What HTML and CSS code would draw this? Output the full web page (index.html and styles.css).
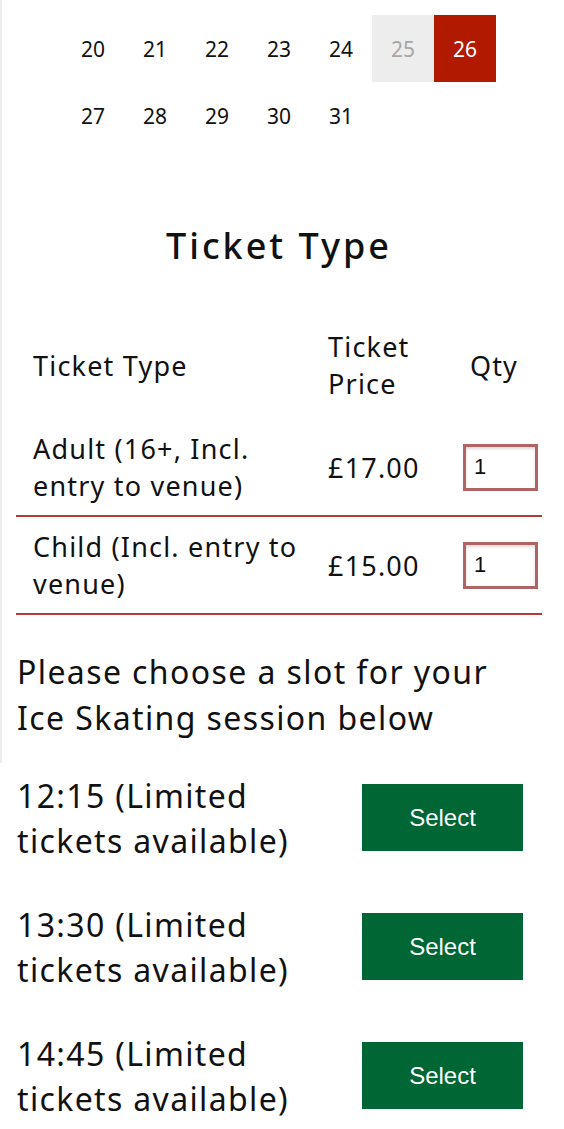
FILE: index.html
```html
<!DOCTYPE html>
<html lang="en">
<head>
<meta charset="utf-8">
<title>Ticket booking</title>
<link rel="stylesheet" href="styles.css">
</head>
<body>
<div class="top">
  <table class="calendar">
    <tbody>
      <tr>
        <td>20</td><td>21</td><td>22</td><td>23</td><td>24</td>
        <td class="disabled">25</td><td class="selected">26</td>
      </tr>
      <tr>
        <td>27</td><td>28</td><td>29</td><td>30</td><td>31</td><td></td><td></td>
      </tr>
    </tbody>
  </table>

  <h2 class="section-title">Ticket Type</h2>

  <table class="tickets">
    <thead>
      <tr>
        <th class="col-type">Ticket Type</th>
        <th class="col-price">Ticket Price</th>
        <th class="col-qty">Qty</th>
      </tr>
    </thead>
    <tbody>
      <tr>
        <td class="col-type">Adult (16+, Incl. entry to venue)</td>
        <td class="col-price">£17.00</td>
        <td class="col-qty"><input class="qty-input" type="text" value="1"></td>
      </tr>
      <tr>
        <td class="col-type">Child (Incl. entry to venue)</td>
        <td class="col-price">£15.00</td>
        <td class="col-qty"><input class="qty-input" type="text" value="1"></td>
      </tr>
    </tbody>
  </table>

  <p class="slot-intro">Please choose a slot for your Ice Skating session below</p>
</div>

<div class="slots">
  <div class="slot">
    <div class="slot-label">12:15 (Limited tickets available)</div>
    <button class="select-btn" type="button">Select</button>
  </div>
  <div class="slot">
    <div class="slot-label">13:30 (Limited tickets available)</div>
    <button class="select-btn" type="button">Select</button>
  </div>
  <div class="slot">
    <div class="slot-label">14:45 (Limited tickets available)</div>
    <button class="select-btn" type="button">Select</button>
  </div>
</div>
</body>
</html>
```

FILE: styles.css
```css
html, body {
  margin: 0;
  padding: 0;
  background: #ffffff;
}

body {
  font-family: "Noto Sans", "Open Sans", sans-serif;
  color: #111111;
}

.top {
  border-left: 2px solid #ececec;
  padding-top: 15px;
  padding-bottom: 22px;
}

.calendar {
  border-collapse: collapse;
  margin-left: 60px;
}

.calendar td {
  width: 62px;
  height: 67px;
  padding: 0;
  text-align: center;
  vertical-align: middle;
  font-size: 21px;
}

.calendar td.disabled {
  background: #ededed;
  color: #a6a6a6;
}

.calendar td.selected {
  background: #b21a00;
  color: #ffffff;
}

.section-title {
  margin: 72px 8px 0 0;
  text-align: center;
  font-size: 36px;
  font-weight: 500;
  letter-spacing: 3px;
  line-height: 50px;
}

.tickets {
  border-collapse: collapse;
  width: 526px;
  margin: 57px 0 0 14px;
  table-layout: fixed;
}

.tickets th {
  font-weight: 400;
  text-align: left;
  vertical-align: middle;
  padding: 0 0 17px 17px;
}

.tickets th,
.tickets td {
  font-size: 27px;
  line-height: 37px;
  letter-spacing: 1.2px;
}

.tickets td {
  padding: 11px 0 11px 17px;
  border-bottom: 2px solid #b53a3a;
  vertical-align: middle;
}

.tickets .col-type { width: 278px; }
.tickets .col-price { width: 118px; }
.tickets th.col-qty { text-align: center; padding-left: 0; }

.qty-input {
  box-sizing: border-box;
  width: 75px;
  height: 47px;
  border: 3px solid #b06464;
  box-shadow: inset 0 2px 3px rgba(0, 0, 0, 0.15);
  font-family: "Liberation Sans", Arial, sans-serif;
  font-size: 22px;
  padding: 0 8px;
  color: #111;
  background: #fff;
}

.slot-intro {
  margin: 34px 22px 0 15px;
  font-size: 32px;
  line-height: 46px;
  letter-spacing: 1.4px;
}

.slots {
  display: flex;
  flex-direction: column;
  gap: 39px;
  padding: 10px 0 0 17px;
}

.slot {
  display: flex;
  align-items: flex-start;
  justify-content: space-between;
  padding-right: 41px;
}

.slot-label {
  width: 300px;
  font-size: 32px;
  line-height: 45px;
  letter-spacing: 1.35px;
}

.select-btn {
  width: 161px;
  height: 67px;
  margin-top: 11px;
  background: #006633;
  color: #ffffff;
  border: 0;
  font-family: "Liberation Sans", Arial, sans-serif;
  font-size: 24px;
  cursor: pointer;
}
```
